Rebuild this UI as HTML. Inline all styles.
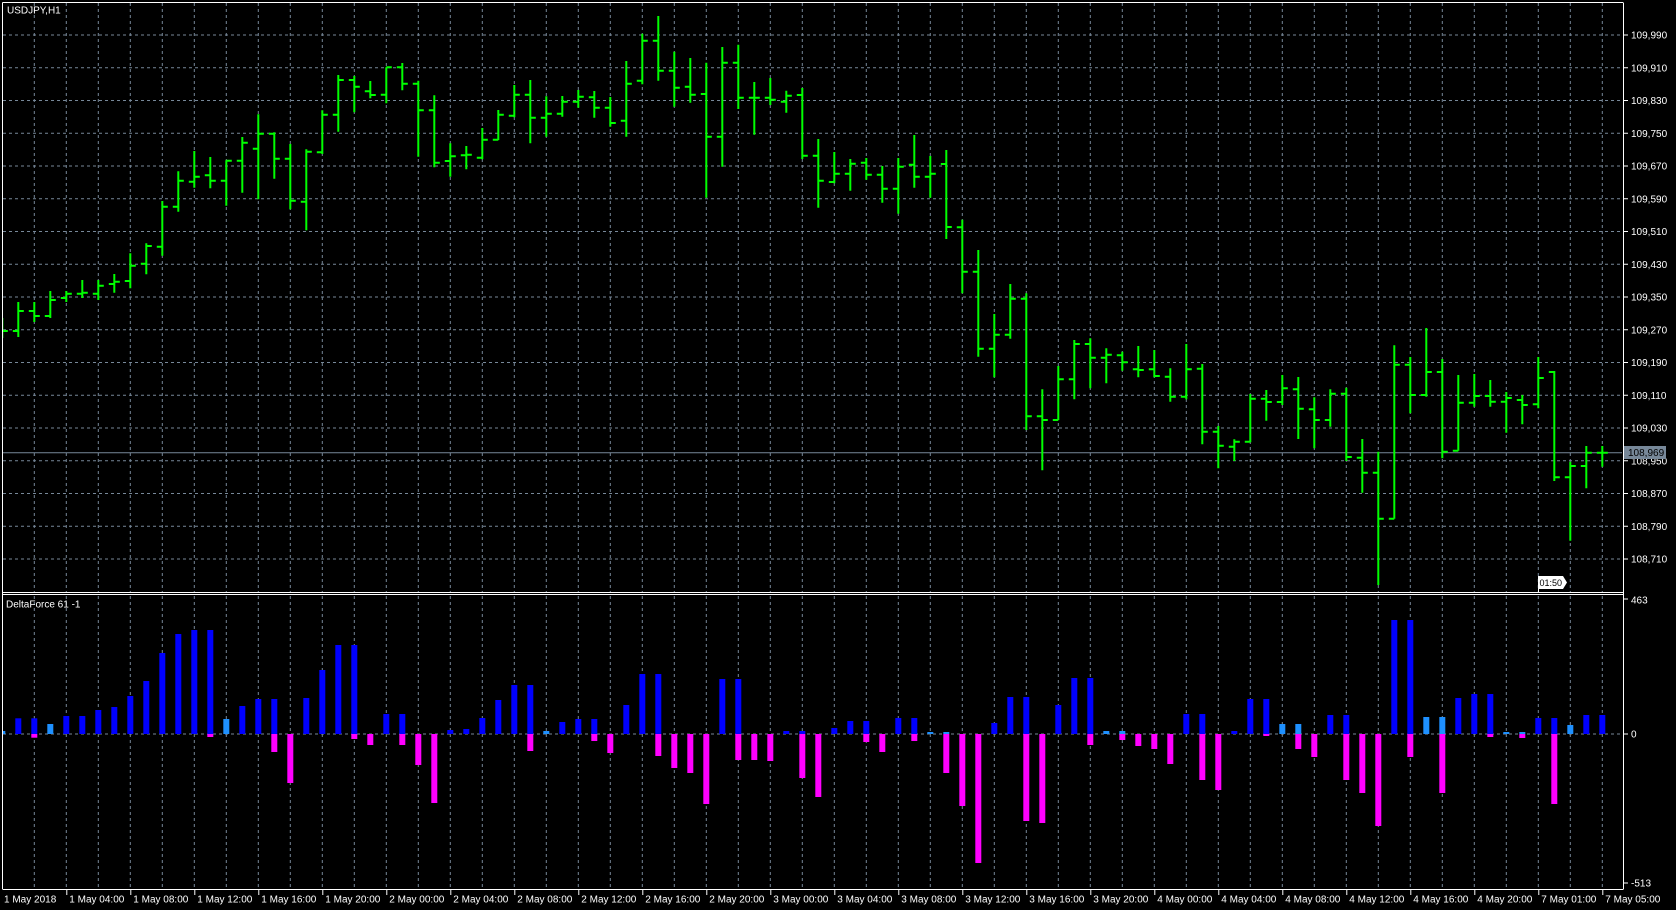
<!DOCTYPE html>
<html><head><meta charset="utf-8">
<style>
html,body{margin:0;padding:0;background:#000;width:1676px;height:910px;overflow:hidden}
svg{display:block}
text{font-family:"Liberation Sans","DejaVu Sans",sans-serif;font-size:10px;fill:#fff}
</style></head>
<body>
<svg id="s" width="1676" height="910" viewBox="0 0 1676 910" xmlns="http://www.w3.org/2000/svg">
<rect width="1676" height="910" fill="#000"/>
<g id="grid"></g>
<g id="hist"></g>
<g id="bars"></g>
<g id="ax"></g>
</svg>
<script>
var NS="http://www.w3.org/2000/svg";
function el(p,t,a,txt){var e=document.createElementNS(NS,t);for(var k in a)e.setAttribute(k,a[k]);if(txt!==undefined)e.textContent=txt;document.getElementById(p).appendChild(e);return e;}
function X(j){return 2.3+16*j;}
var G="#778899";
for(var k=0;k<17;k++){var y=35+32.75*k;el("grid","line",{x1:3,x2:1622,y1:y,y2:y,stroke:G,"stroke-width":1,"stroke-dasharray":"3,3"});}
for(var x=34.3;x<1622;x+=32){el("grid","line",{x1:x,x2:x,y1:3,y2:592,stroke:G,"stroke-width":1,"stroke-dasharray":"3,3"});el("grid","line",{x1:x,x2:x,y1:596,y2:888,stroke:G,"stroke-width":1,"stroke-dasharray":"3,3"});}
el("grid","line",{x1:3,x2:1622,y1:734,y2:734,stroke:G,"stroke-width":1,"stroke-dasharray":"3,3"});
el("grid","line",{x1:3,x2:1622,y1:452.7,y2:452.7,stroke:G,"stroke-width":1});
var B=[
[318,338,333,331],[302,337,331,311],[302,322,311,316],[291,318,316,300],[291,302,298,293.7],
[280,298,293.7,292.7],[280,300,293.7,285.7],[274,292.7,284,281.7],[253.3,288.3,281,265.7],[243.3,274.3,263.7,246],
[201,255.7,246.7,206.7],[171.3,211.7,206.7,180.7],[151,187.7,181.7,176.7],[157,188.3,175.3,180.7],[160.3,205.7,180.7,160.7],
[137,192.7,160.7,142.7],[114.3,199.3,148.7,133.7],[132.3,178.7,133.7,158.7],[144,209.3,158.7,200.7],[149.3,230.3,201.7,151.7],
[110.3,154,152.3,114.7],[75,131.7,114.7,80],[76,112.3,80,86.7],[81,98.3,91.3,95],[67.3,103.3,94.7,67.3],
[63,90.3,67.3,83.7],[80.7,156.7,83.7,110.3],[95.3,167.3,110.3,162.7],[143.3,176.7,161,156.3],[146,169.3,155.3,154.7],
[128,159.3,157.7,139.7],[110,140,139.7,114.7],[85,117.3,115.7,94.7],[80,143.3,94.7,117.7],[96.3,136.7,117.7,113.7],
[96,116.7,113.7,101.7],[90,107.7,101.7,96.7],[91,117.7,97.3,107.7],[97,126.7,107.7,123],[61,136.7,120.7,83.7],
[33.7,84.3,80.7,40.7],[16,80.7,40.7,70.7],[51.7,106.7,70.7,87.7],[58,102.7,86.7,94.7],[62.7,197.7,94,136.7],
[47,166.7,136.7,62.7],[44.7,109,62.7,97.7],[82,134.7,97.7,97.7],[78,105,97.7,99.7],[90.7,112.7,101.7,95.7],
[88,159,95,155.7],[139,207.7,155.7,180.7],[152,183.3,182,173.7],[159,190.7,173.7,163.7],[158,179.7,162.7,174.7],
[166,202.7,174.7,188.7],[158,213.7,188.7,166.7],[135,187.7,164.7,176.7],[156,197.7,176.7,173.7],[150,239,164,227],
[219.7,293.3,227.3,271.7],[250,356.7,271.7,348.7],[314,377.3,348.7,334.7],[284,338.7,334.7,298.7],[293.3,430,298.7,416.3],
[389.3,470.3,416.3,420],[366,420,420,379.3],[340,399.3,379.3,344],[338.3,388.3,344,357.7],[348.3,383.3,357.7,354.7],
[351.7,370.7,355.3,362.3],[346,377.3,369.3,370],[350,377.3,369.3,376],[368.3,401.7,376.7,396.7],[344,399.3,396.7,369.3],
[364,444.3,368.7,431.7],[426,468.3,431.7,445.7],[439.3,461,446.7,441.7],[394,442.3,441.7,398.7],[390,420.7,398.7,402],
[375,405,402,388.3],[377,439,389.3,408.7],[397.3,448.3,409.3,420],[389.3,426.7,420,393.7],[387.7,461,393.7,457],
[439,492.7,457.7,472.7],[451.7,585,472.7,518.7],[345.3,518.7,518.7,364.7],[357,413.3,364.7,395],[328,396.7,395,372],
[359,458.3,372,451.7],[375,450.7,450.7,402.7],[374,406.7,402.7,396],[380,406.7,396,401.7],[392,432.7,401.7,398],
[395,424.3,400,405],[357,408.3,404.3,378],[371,481,372,477.3],[461.7,540.7,477.3,466],[446,488.3,466,452.7],
[446,466.7,452.7,452.7]];
var d="";
for(var j=0;j<B.length;j++){var x=X(j),b=B[j];
 d+="M"+x+" "+b[0]+"V"+b[1]+"M"+(x-5.5)+" "+b[2]+"H"+x+"M"+x+" "+b[3]+"H"+(x+5.5);}
el("bars","path",{d:d,stroke:"#00ff00","stroke-width":2,fill:"none"});
var H=[[3,0,1],[15.7,0],[15.7,3.7],[10,0,1],[18,0],[18,0],[24,0],[27,0],[38,0],[53,0],
[81,0],[100,0],[104,0],[104,3],[15,0,1],[28,0],[35,0],[35,18],[0,49],[36,0],
[64,0],[89,0],[89,5],[0,11],[20,0],[20,11],[0,31],[0,69],[4,0],[5,0],
[16,0],[34,0],[49,0],[49,17],[3,0,1],[12,0],[15,0],[15,7],[0,19],[29,0],
[60,0],[60,22],[0,34],[0,39],[0,70],[55,0],[55,26],[0,26],[0,27],[3,0],
[3,44],[0,63],[6,0],[13,0],[13,8],[0,18],[16,0],[16,7],[2,0,1],[2,39,1],
[0,72],[0,129],[11,0],[37,0],[37,87],[0,89],[29,0],[56,0],[56,11],[3,0,1],
[3,6,1],[0,12],[0,15],[0,30],[20,0],[20,46],[0,56],[3,0],[35,0],[35,2],
[10,0,1],[10,15,1],[0,23],[19,0],[19,46],[0,59],[0,92],[114,0],[114,23],[17,0,1],
[17,59,1],[36,0],[40,0],[40,3],[2,0,1],[2,4,1],[16,0],[16,70],[9,0,1],[19,0],[19,0]];
for(var j=0;j<H.length;j++){var x=X(j)-3,h=H[j];
 if(h[0]>0)el("hist","rect",{x:x,y:734-h[0],width:6,height:h[0],fill:h[2]?"#1e90ff":"#0000ff"});
 if(h[1]>0)el("hist","rect",{x:x,y:734,width:6,height:h[1],fill:"#ff00ff"});}
var W="#ffffff";
el("ax","rect",{x:0,y:0,width:2,height:910,fill:"#000"});
el("ax","line",{x1:2.5,x2:1623,y1:2.5,y2:2.5,stroke:W,"stroke-width":1});
el("ax","line",{x1:2.5,x2:2.5,y1:2.5,y2:889,stroke:W,"stroke-width":1});
el("ax","line",{x1:2.5,x2:1623,y1:592.5,y2:592.5,stroke:W,"stroke-width":1});
el("ax","line",{x1:2.5,x2:1623,y1:594.5,y2:594.5,stroke:W,"stroke-width":1});
el("ax","line",{x1:2.5,x2:1623,y1:889.5,y2:889.5,stroke:W,"stroke-width":1});
el("ax","line",{x1:1623.5,x2:1623.5,y1:2.5,y2:889.5,stroke:W,"stroke-width":1});
var P=["109.990","109.910","109.830","109.750","109.670","109.590","109.510","109.430","109.350","109.270","109.190","109.110","109.030","108.950","108.870","108.790","108.710"];
for(var k=0;k<P.length;k++){var y=35+32.75*k;el("ax","line",{x1:1623,x2:1628,y1:y,y2:y,stroke:W});el("ax","text",{x:1631,y:y+3.5},P[k].replace(".",","));}
el("ax","rect",{x:1624,y:446,width:42,height:13,fill:"#778899"});
el("ax","text",{x:1628,y:456},"108,969").setAttribute("style","fill:#000");
el("ax","line",{x1:1623,x2:1628,y1:599,y2:599,stroke:W});el("ax","text",{x:1631,y:603.5},"463");
el("ax","line",{x1:1623,x2:1628,y1:734,y2:734,stroke:W});el("ax","text",{x:1631,y:737.5},"0");
el("ax","line",{x1:1623,x2:1628,y1:883,y2:883,stroke:W});el("ax","text",{x:1631,y:886.5},"-513");
el("ax","text",{x:7,y:13.5},"USDJPY,H1");
el("ax","text",{x:6,y:607.5},"DeltaForce 61 -1");
var T=["1 May 2018","1 May 04:00","1 May 08:00","1 May 12:00","1 May 16:00","1 May 20:00","2 May 00:00","2 May 04:00","2 May 08:00","2 May 12:00","2 May 16:00","2 May 20:00","3 May 00:00","3 May 04:00","3 May 08:00","3 May 12:00","3 May 16:00","3 May 20:00","4 May 00:00","4 May 04:00","4 May 08:00","4 May 12:00","4 May 16:00","4 May 20:00","7 May 01:00","7 May 05:00"];
for(var k=0;k<T.length;k++){var x=X(4*k);if(k>0)el("ax","line",{x1:x+0.5,x2:x+0.5,y1:889,y2:895,stroke:W});el("ax","text",{x:(k==0?4:x+3),y:902.5},T[k]);}
el("ax","line",{x1:1538.5,x2:1538.5,y1:588,y2:593,stroke:W});
el("ax","polygon",{points:"1538,576 1563,576 1567,582.5 1563,589 1538,589",fill:"#fff"});
el("ax","text",{x:1539.5,y:586},"01:50").setAttribute("style","fill:#000;font-size:9px");
</script>
</body></html>
